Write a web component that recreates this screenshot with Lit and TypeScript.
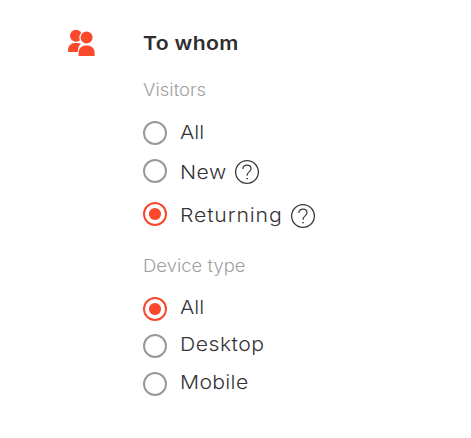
import { LitElement, html, css } from "lit";
import { customElement, property } from "lit/decorators.js";

@customElement("help-icon")
class HelpIcon extends LitElement {
  static styles = css`
    :host { display: block; width: 26px; height: 26px; }
    svg { display: block; }
  `;
  render() {
    return html`<svg width="26" height="26" viewBox="0 0 26 26" fill="none" stroke="#3c3c3f">
      <circle cx="13" cy="13" r="11.4" stroke-width="1.3"></circle>
      <path d="M8.9 10V9.4C9.2 7.4 10.8 6.2 13 6.2c2.4 0 4 1.4 4 3.5 0 3-3.9 3.4-3.9 6.7v.4" stroke-width="1.2"></path>
      <path d="M12.3 19.7h1.6" stroke-width="1.2"></path>
    </svg>`;
  }
}

@customElement("radio-option")
class RadioOption extends LitElement {
  @property() label = "";
  @property({ type: Boolean, reflect: true }) checked = false;
  @property({ type: Boolean }) help = false;

  static styles = css`
    :host { display: flex; align-items: center; height: 26px; }
    .dot {
      box-sizing: border-box; flex: none; width: 24px; height: 24px;
      border: 2px solid #999; border-radius: 50%;
      display: grid; place-items: center;
    }
    :host([checked]) .dot { border-color: #f9482c; }
    :host([checked]) .dot::after {
      content: ""; width: 11.5px; height: 11.5px; border-radius: 50%; background: #f9482c;
    }
    .label {
      margin-left: 13px; line-height: 26px; white-space: nowrap;
      padding-top: var(--label-drop, 0px);
      margin-top: var(--label-lift, 0px);
      transform: scaleX(1.1); transform-origin: left center;
    }
    help-icon { margin-left: var(--help-gap, 7px); margin-top: var(--help-drop, 2px); }
  `;
  render() {
    return html`<span class="dot"></span><span class="label">${this.label}</span>
      ${this.help ? html`<help-icon></help-icon>` : ""}`;
  }
}

@customElement("app-root")
class AppRoot extends LitElement {
  static styles = css`
    :host {
      display: flex; box-sizing: border-box; height: 438px; background: #fff; color: #343437;
      padding: 28px 0 0 67px;
      font: 350 19.3px Inter, "Open Sans", sans-serif;
    }
    .people { flex: none; width: 28px; height: 30px; margin-right: 48px; }
    h2, h3 { margin: 0; transform-origin: left center; }
    h2 { font-size: 19.3px; font-weight: 570; line-height: 30px; letter-spacing: 0.3px; color: #2d2d30; transform: scaleX(1.1); }
    h3 { font-size: 17.3px; font-weight: 350; line-height: 24px; color: #a0a0a0; transform: scaleX(1.07); }
    .visitors { margin-top: 20px; }
    .device { margin-top: 27px; }
    .all { margin-top: 18px; --label-lift: -3px; }
    .new { margin-top: 12px; --label-drop: 2px; letter-spacing: 0.4px; --help-gap: 11.6px; }
    .returning { margin-top: 17px; --label-drop: 2px; letter-spacing: 0.78px; --help-drop: 3px; --help-gap: 17.2px; }
    .type-all { margin-top: 18px; --label-lift: -4px; }
    .desktop { margin-top: 11px; --label-lift: -4px; letter-spacing: 0.42px; }
    .mobile { margin-top: 12px; --label-lift: -4px; letter-spacing: 0.28px; }
  `;
  render() {
    return html`
      <svg class="people" viewBox="0 0 28 30" fill="#f9482c">
        <circle cx="9" cy="7.8" r="6"></circle>
        <path d="M1 24v-2.5a6.5 6.5 0 0 1 6.5-6.5h3q2 0 3.3 1Q11 18 10.7 24Z"></path>
        <circle cx="19.6" cy="9.6" r="7.3" fill="#fff"></circle>
        <circle cx="19.6" cy="9.6" r="6"></circle>
        <path d="M11.6 28v-3.5a7 7 0 0 1 7-7h2a7 7 0 0 1 7 7V28Z"></path>
      </svg>
      <section>
        <h2>To whom</h2>
        <h3 class="visitors">Visitors</h3>
        <radio-option class="all" label="All"></radio-option>
        <radio-option class="new" label="New" help></radio-option>
        <radio-option class="returning" label="Returning" checked help></radio-option>
        <h3 class="device">Device type</h3>
        <radio-option class="type-all" label="All" checked></radio-option>
        <radio-option class="desktop" label="Desktop"></radio-option>
        <radio-option class="mobile" label="Mobile"></radio-option>
      </section>`;
  }
}
